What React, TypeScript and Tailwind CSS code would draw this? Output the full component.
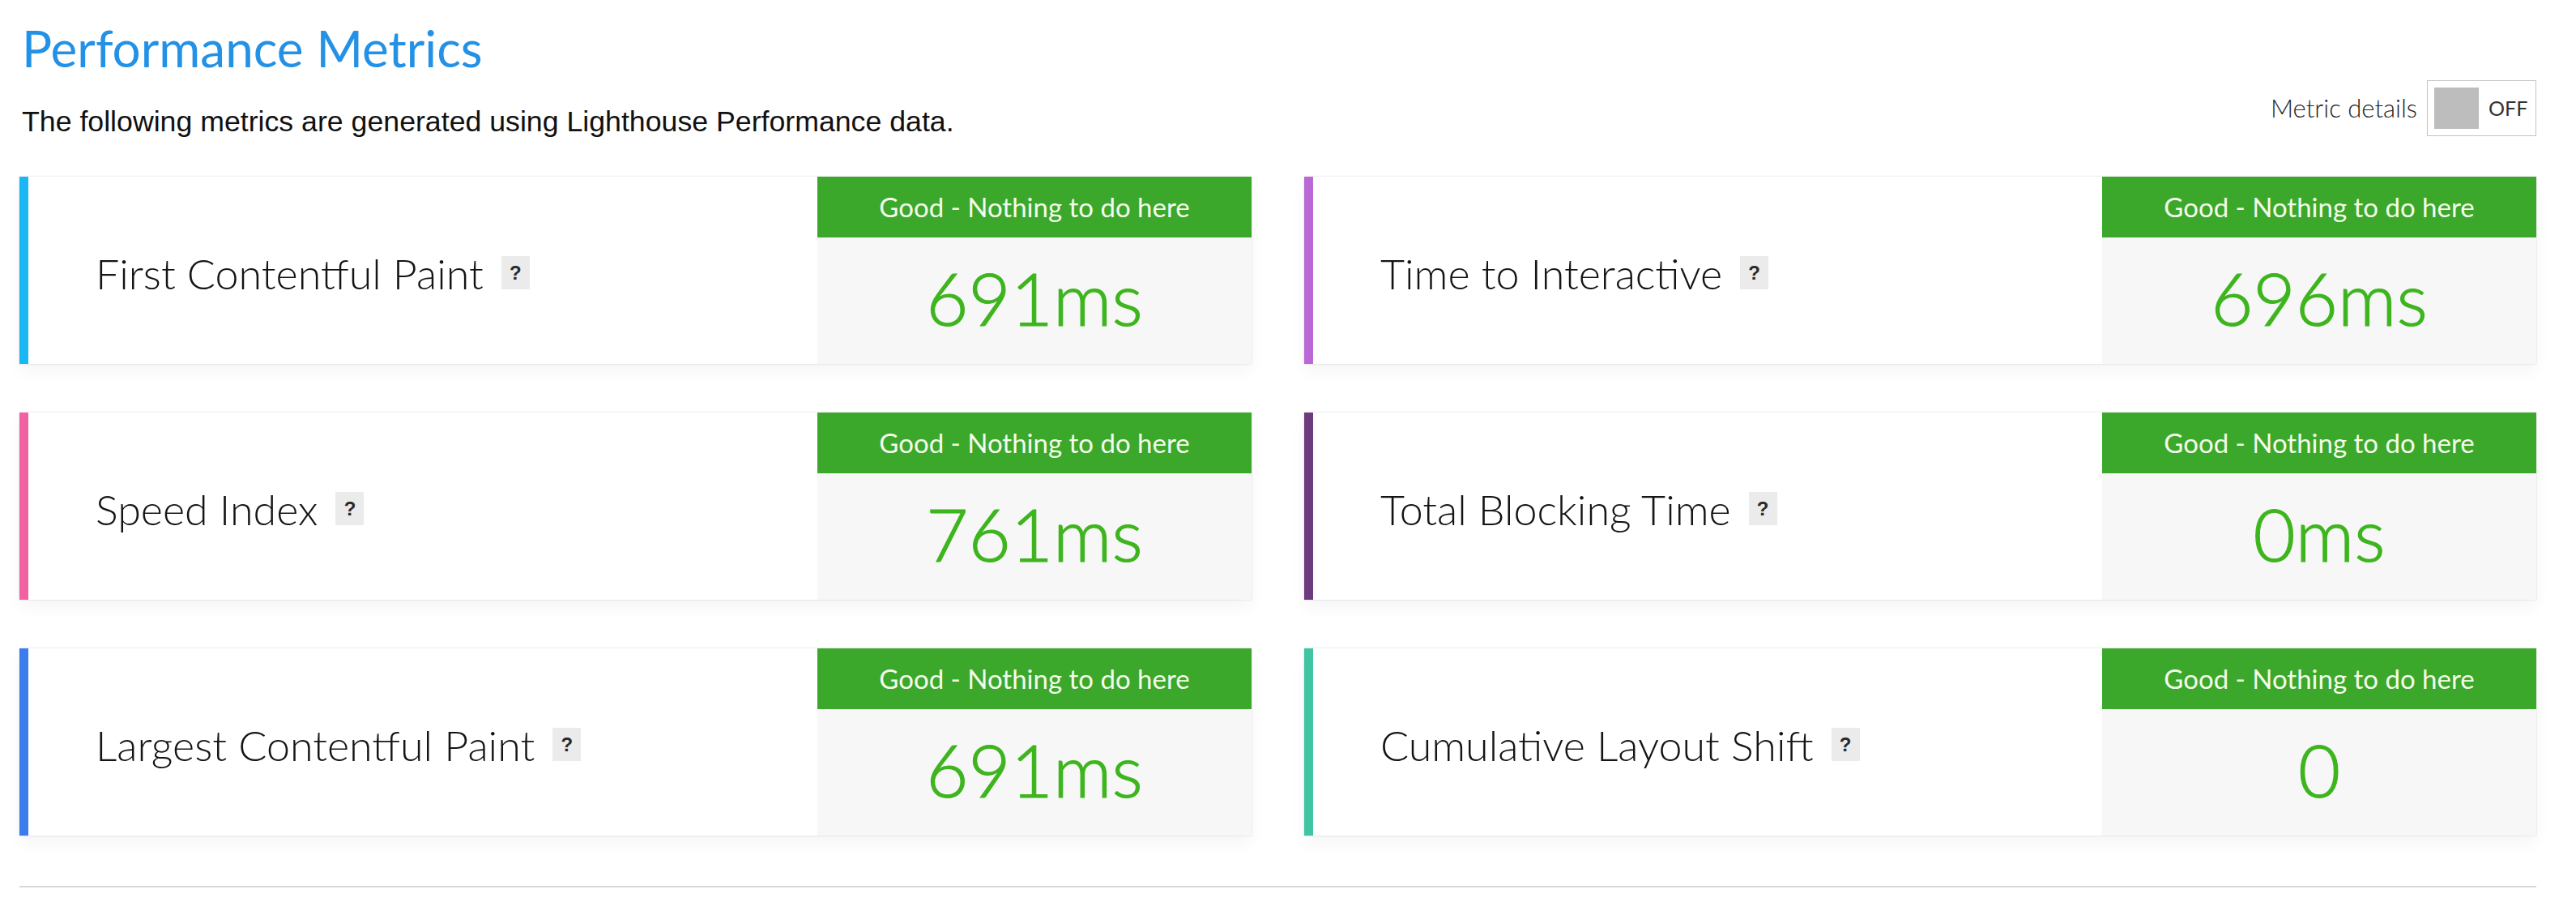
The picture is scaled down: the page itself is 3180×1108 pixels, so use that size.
import React from 'react';

type Metric = {
  name: string;
  value: string;
  accent: string;
};

const metrics: Metric[] = [
  { name: 'First Contentful Paint', value: '691ms', accent: 'bg-[#1bb6f4]' },
  { name: 'Time to Interactive', value: '696ms', accent: 'bg-[#b968d6]' },
  { name: 'Speed Index', value: '761ms', accent: 'bg-[#f262a3]' },
  { name: 'Total Blocking Time', value: '0ms', accent: 'bg-[#6d3b7e]' },
  { name: 'Largest Contentful Paint', value: '691ms', accent: 'bg-[#3b7ded]' },
  { name: 'Cumulative Layout Shift', value: '0', accent: 'bg-[#40c5a3]' },
];

function MetricCard({ metric }: { metric: Metric }) {
  return (
    <div className="flex h-[231px] bg-white shadow-[0_0_2px_rgba(0,0,0,0.16),0_10px_18px_rgba(0,0,0,0.04)]">
      <div className={`w-[11px] shrink-0 ${metric.accent}`} />
      <div className="flex flex-1 items-center pt-[6px] pl-[83px]">
        <span className="font-['Lato',sans-serif] text-[52px] font-light leading-[1.2] text-[#141414]">
          {metric.name}
        </span>
        <span className="ml-[22px] flex h-[41px] w-[35px] items-center justify-center bg-[#ebebeb] font-['Liberation_Sans',Arial,sans-serif] text-[24px] font-bold text-[#2a2a2a]">
          ?
        </span>
      </div>
      <div className="flex w-[536px] shrink-0 flex-col">
        <div className="flex h-[75px] items-center justify-center bg-[#3ba82b] font-['Lato',sans-serif] text-[33px] text-[#f4fbea]">
          Good - Nothing to do here
        </div>
        <div className="flex flex-1 items-center justify-center bg-[#f7f7f7] pb-[8px] font-['Lato',sans-serif] text-[90px] font-light leading-none text-[#3eb51f] [-webkit-text-stroke:1.2px_#3eb51f]">
          {metric.value}
        </div>
      </div>
    </div>
  );
}

export default function App() {
  return (
    <div className="h-[1108px] w-[3180px] bg-white pl-6 pr-[49px]">
      <div className="flex items-start justify-between">
        <div>
          <h1 className="pt-[22px] pl-[3px] font-['Lato',sans-serif] text-[62px] leading-[1.2] text-[#2291e6]">
            Performance Metrics
          </h1>
          <p className="mt-[34px] pl-[3px] font-['Liberation_Sans',Arial,sans-serif] text-[35.7px] leading-[40px] text-[#111]">
            The following metrics are generated using Lighthouse Performance data.
          </p>
        </div>
        <div className="flex items-center gap-3 pt-[99px]">
          <span className="font-['Lato',sans-serif] text-[31px] font-light text-[#222]">Metric details</span>
          <div className="flex h-[69px] w-[135px] items-center border border-[#c4c4c4] pl-[8px]">
            <div className="h-[51px] w-[55px] bg-[#bdbdbd]" />
            <span className="ml-3 font-['Lato',sans-serif] text-[25px] text-[#333]">OFF</span>
          </div>
        </div>
      </div>

      <div className="mt-[48px] grid grid-cols-2 gap-x-[65px] gap-y-[60px]">
        {metrics.map((m) => (
          <MetricCard key={m.name} metric={m} />
        ))}
      </div>

      <div className="mt-[62px] h-[2px] bg-[#d9d9d9]" />
    </div>
  );
}
